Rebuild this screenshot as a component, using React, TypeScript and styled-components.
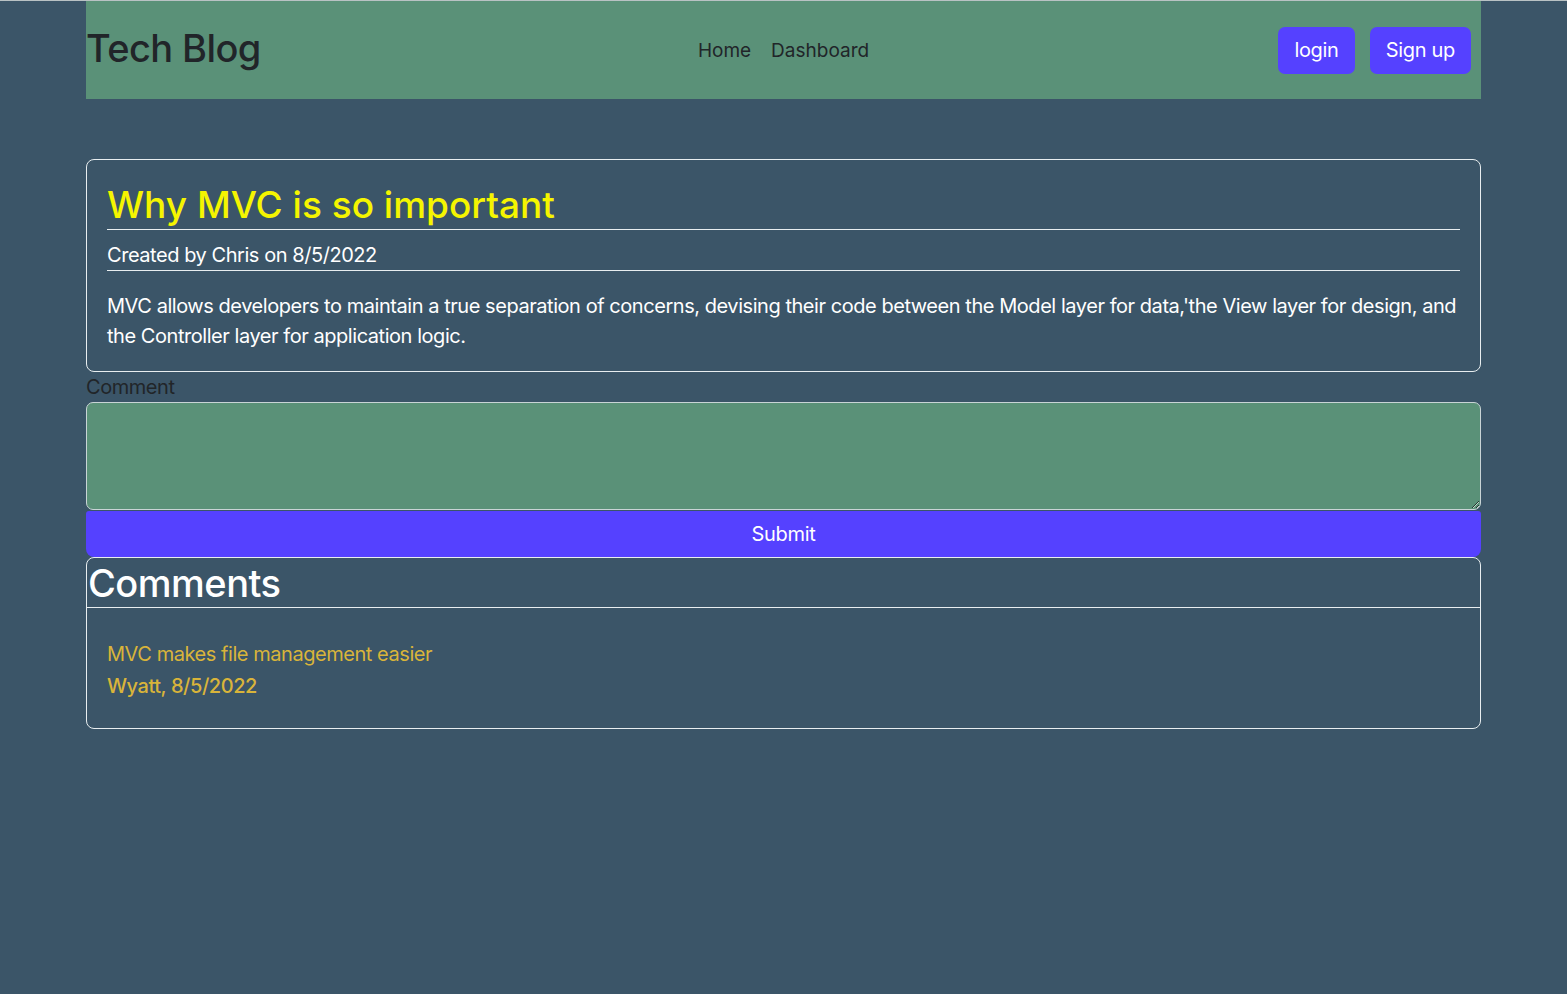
import styled, { createGlobalStyle } from 'styled-components';

const GlobalStyle = createGlobalStyle`
  body {
    margin: 0;
    background: #3b5568;
    font-family: Inter, "Noto Sans", "Liberation Sans", sans-serif;
    font-size: 20px;
    letter-spacing: -0.45px;
    color: #212529;
    border-top: 1px solid #b9c2c4;
  }
`;

const post = {
  title: 'Why MVC is so important',
  author: 'Chris',
  date: '8/5/2022',
  body: "MVC allows developers to maintain a true separation of concerns, devising their code between the Model layer for data,'the View layer for design, and the Controller layer for application logic.",
};

const comments = [
  { id: 1, text: 'MVC makes file management easier', author: 'Wyatt', date: '8/5/2022' },
];

const App = () => {
  return (
    <>
      <GlobalStyle />
      <Container>
        <Header>
          <Brand>Tech Blog</Brand>
          <Nav>
            <NavLink href="#">Home</NavLink>
            <NavLink href="#">Dashboard</NavLink>
          </Nav>
          <Actions>
            <Button>login</Button>
            <Button>Sign up</Button>
          </Actions>
        </Header>

        <Main>
          <PostCard>
            <PostTitle>{post.title}</PostTitle>
            <PostMeta>
              Created by {post.author} on {post.date}
            </PostMeta>
            <PostBody>{post.body}</PostBody>
          </PostCard>

          <CommentForm>
            <Label htmlFor="comment">Comment</Label>
            <TextArea id="comment" />
            <SubmitButton type="button">Submit</SubmitButton>
          </CommentForm>

          <CommentsCard>
            <CommentsHeader>Comments</CommentsHeader>
            <CommentsBody>
              {comments.map((c) => (
                <CommentItem key={c.id}>
                  <CommentText>{c.text}</CommentText>
                  <CommentAuthor>
                    {c.author}, {c.date}
                  </CommentAuthor>
                </CommentItem>
              ))}
            </CommentsBody>
          </CommentsCard>
        </Main>
      </Container>
    </>
  );
};

export default App;

const Container = styled.div`
  width: 1395px;
  margin: 0 auto;
`;

const Header = styled.header`
  height: 98px;
  background: #5a9178;
  display: grid;
  grid-template-columns: 1fr auto 1fr;
  align-items: center;
`;

const Brand = styled.h1`
  margin: 0 0 4px;
  font-size: 38px;
  font-weight: 500;
  letter-spacing: -0.6px;
  color: #212529;
`;

const Nav = styled.nav`
  display: flex;
  gap: 20px;
`;

const NavLink = styled.a`
  font-size: 19px;
  letter-spacing: 0;
  color: #212529;
  text-decoration: none;
`;

const Actions = styled.div`
  display: flex;
  justify-content: flex-end;
  gap: 15px;
  padding-right: 10px;
`;

const Button = styled.button`
  height: 47px;
  padding: 0 16px;
  border: none;
  border-radius: 7px;
  background: #5541ff;
  color: #fff;
  font-family: inherit;
  font-size: 20px;
  letter-spacing: -0.3px;
  cursor: pointer;
`;

const Main = styled.main`
  padding-top: 60px;
`;

const PostCard = styled.section`
  border: 1px solid #e8eef0;
  border-radius: 8px;
  padding: 20px;
`;

const PostTitle = styled.h2`
  margin: 0;
  padding: 2px 0 1px;
  font-size: 37px;
  font-weight: 500;
  letter-spacing: 0;
  line-height: 46px;
  color: #f5f500;
  border-bottom: 1px solid #e8eef0;
`;

const PostMeta = styled.p`
  margin: 0;
  padding: 12px 0 2px;
  color: #fff;
  line-height: 26px;
  border-bottom: 1px solid #e8eef0;
`;

const PostBody = styled.p`
  margin: 20px 0 0;
  color: #fff;
  line-height: 30px;
`;

const CommentForm = styled.form`
  display: flex;
  flex-direction: column;
`;

const Label = styled.label`
  line-height: 30px;
  color: #212529;
`;

const TextArea = styled.textarea`
  height: 108px;
  box-sizing: border-box;
  background: #5a9178;
  border: 1px solid #c9d4d6;
  border-radius: 7px;
  font-family: inherit;
  font-size: 20px;
  margin: 0 0 1px;
`;

const SubmitButton = styled(Button)`
  height: 46px;
  width: 100%;
  border-radius: 3px 3px 8px 8px;
`;

const CommentsCard = styled.section`
  border: 1px solid #e8eef0;
  border-radius: 8px;
`;

const CommentsHeader = styled.h2`
  margin: 0;
  padding: 0 0 0 1px;
  height: 49px;
  font-size: 38px;
  font-weight: 500;
  letter-spacing: -0.5px;
  line-height: 50px;
  color: #fff;
  border-bottom: 1px solid #e8eef0;
`;

const CommentsBody = styled.div`
  padding: 30px 20px 26px;
`;

const CommentItem = styled.div`
  color: #d9b43a;
`;

const CommentText = styled.p`
  margin: 0;
  line-height: 32px;
`;

const CommentAuthor = styled.p`
  margin: 0;
  line-height: 32px;
  font-weight: 500;
`;
